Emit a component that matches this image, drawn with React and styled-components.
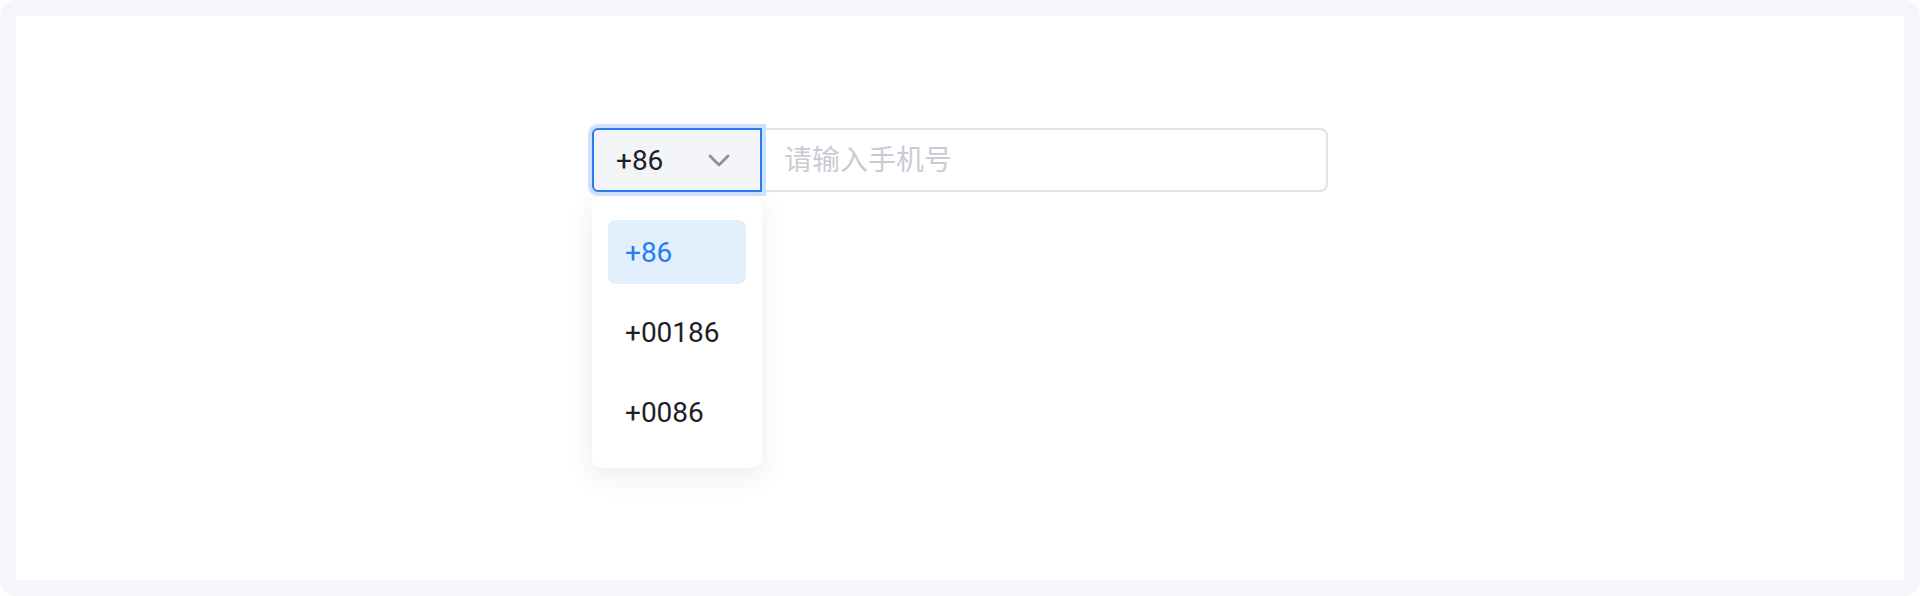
import React, { useState } from 'react'
import styled, { createGlobalStyle } from 'styled-components'

const GlobalStyle = createGlobalStyle`
  body {
    margin: 0;
    font-family: "Roboto", "Noto Sans CJK SC", sans-serif;
    background: #ffffff;
  }
  * { box-sizing: border-box; }
`

const Frame = styled.div`
  height: 596px;
  padding: 16px;
  background: #f5f6fa;
  border-radius: 16px;
`

const Canvas = styled.div`
  height: 100%;
  background: #ffffff;
  display: flex;
  justify-content: center;
  padding-top: 112px;
`

const Group = styled.div`
  position: relative;
  width: 736px;
  height: 64px;
  display: flex;
`

const Trigger = styled.button`
  width: 170px;
  height: 64px;
  display: flex;
  align-items: center;
  justify-content: space-between;
  padding: 0 30px 0 22px;
  background: #f4f5f9;
  border: 2px solid #2a7af5;
  border-radius: 6px 0 0 6px;
  box-shadow: 0 0 0 4px #cde0fc;
  font-family: inherit;
  font-size: 28px;
  color: #1d2129;
  cursor: pointer;
  position: relative;
  z-index: 1;
`

const PhoneInput = styled.input`
  flex: 1;
  height: 64px;
  border: 2px solid #e0e2e8;
  border-left: none;
  border-radius: 0 8px 8px 0;
  padding: 0 22px;
  font-family: inherit;
  font-size: 28px;
  color: #1d2129;
  outline: none;

  &::placeholder {
    color: #c9ccd4;
  }
`

const Menu = styled.ul`
  position: absolute;
  top: 68px;
  left: 0;
  width: 170px;
  margin: 0;
  padding: 24px 16px;
  list-style: none;
  background: #ffffff;
  border-radius: 10px;
  box-shadow: 0 8px 28px rgba(30, 40, 70, 0.09);
  display: flex;
  flex-direction: column;
  gap: 16px;
`

const Option = styled.li`
  height: 64px;
  display: flex;
  align-items: center;
  padding-left: 17px;
  border-radius: 8px;
  font-size: 28px;
  color: ${p => (p.$active ? '#2a7af5' : '#1d2129')};
  background: ${p => (p.$active ? '#e1f0fc' : 'transparent')};
  cursor: pointer;
`

const Chevron = () => (
  <svg width="22" height="14" viewBox="0 0 22 14" fill="none">
    <path d="M2 3l9 9 9-9" stroke="#8a8f99" strokeWidth="2.8" strokeLinecap="round" strokeLinejoin="round" />
  </svg>
)

const codes = ['+86', '+00186', '+0086']

export default function App() {
  const [code, setCode] = useState('+86')
  return (
    <>
      <GlobalStyle />
      <Frame>
        <Canvas>
          <Group>
            <Trigger>
              <span>{code}</span>
              <Chevron />
            </Trigger>
            <PhoneInput placeholder="请输入手机号" />
            <Menu>
              {codes.map(c => (
                <Option key={c} $active={c === code} onClick={() => setCode(c)}>
                  {c}
                </Option>
              ))}
            </Menu>
          </Group>
        </Canvas>
      </Frame>
    </>
  )
}
